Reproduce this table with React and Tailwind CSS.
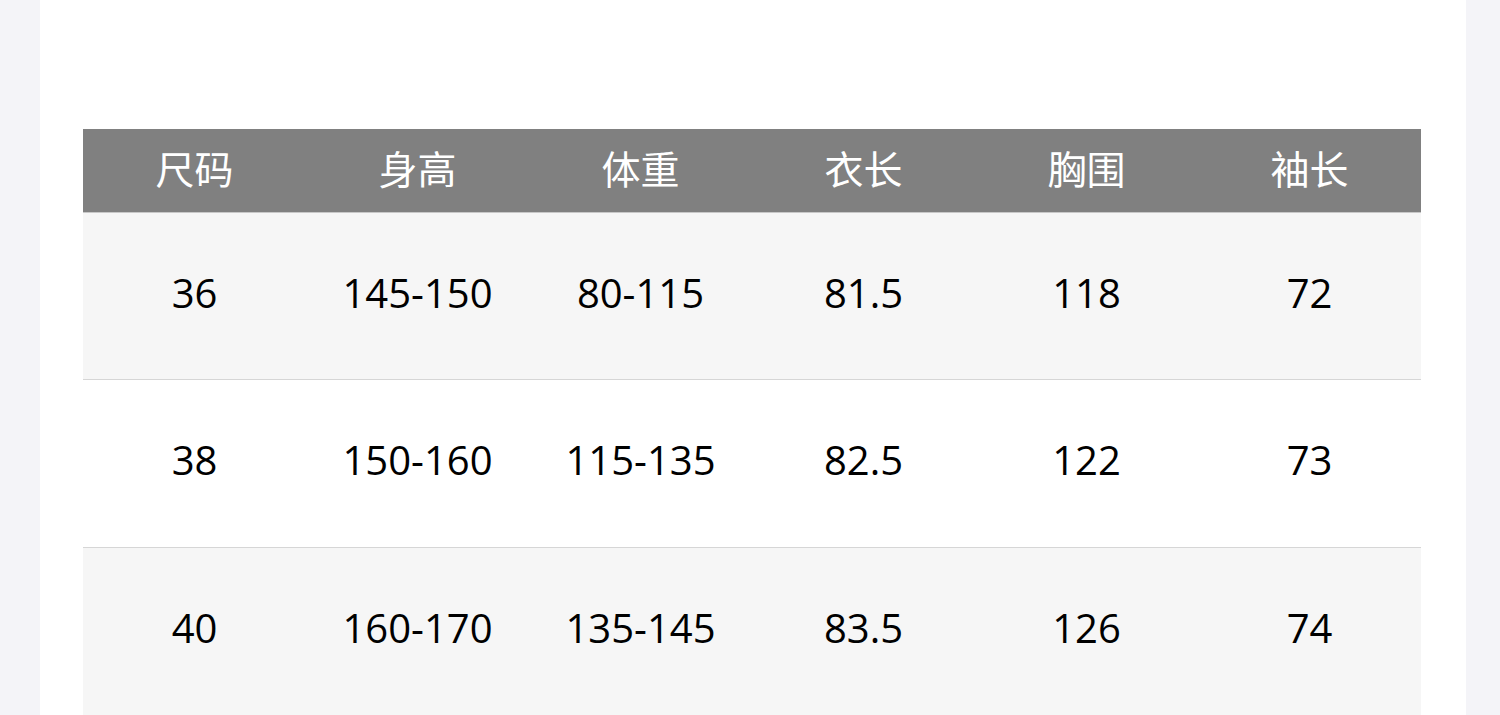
const headers = ["尺码", "身高", "体重", "衣长", "胸围", "袖长"];

const rows = [
  ["36", "145-150", "80-115", "81.5", "118", "72"],
  ["38", "150-160", "115-135", "82.5", "122", "73"],
  ["40", "160-170", "135-145", "83.5", "126", "74"],
];

export default function App() {
  return (
    <div
      className="min-h-screen bg-[#f4f4f8] pl-[40px]"
      style={{ fontFamily: '"Open Sans", "Noto Sans CJK SC", sans-serif' }}
    >
      <div className="w-[1426px] bg-white pt-[129px] pl-[43px] pb-[40px]">
        <div className="w-[1338px]">
          <div className="grid grid-cols-6 h-[84px] bg-[#808080] border-b border-[#c8c8c8] text-white text-[39px]">
            {headers.map((h) => (
              <div key={h} className="flex items-center justify-center pb-[3px]">
                {h}
              </div>
            ))}
          </div>
          {rows.map((r, i) => (
            <div
              key={i}
              className={
                i === 0
                  ? "grid grid-cols-6 h-[167px] bg-[#f6f6f6] border-b border-[#d6d6d6] text-black text-[40px]"
                  : i % 2 === 0
                  ? "grid grid-cols-6 h-[168px] bg-[#f6f6f6] border-b border-[#d6d6d6] text-black text-[40px]"
                  : "grid grid-cols-6 h-[168px] bg-white border-b border-[#d6d6d6] text-black text-[40px]"
              }
            >
              {r.map((c, j) => (
                <div key={j} className="flex items-center justify-center pb-[7px]">
                  {c}
                </div>
              ))}
            </div>
          ))}
        </div>
      </div>
    </div>
  );
}
